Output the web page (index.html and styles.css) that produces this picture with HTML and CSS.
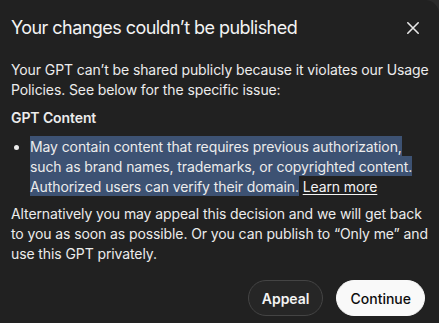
FILE: index.html
```html
<!DOCTYPE html>
<html lang="en">
<head>
<meta charset="utf-8">
<title>Your changes couldn't be published</title>
<link rel="stylesheet" href="styles.css">
</head>
<body>
<div class="dialog">
  <div class="header">
    <h2 class="title">Your changes couldn’t be published</h2>
    <button class="close" aria-label="Close">
      <svg width="24" height="24" viewBox="0 0 24 24" fill="none" stroke="currentColor" stroke-width="1.6" stroke-linecap="round"><path d="M6.8 6.8 17.2 17.2M17.2 6.8 6.8 17.2"/></svg>
    </button>
  </div>
  <p class="intro">Your GPT can’t be shared publicly because it violates our Usage Policies. See below for the specific issue:</p>
  <div class="section-title">GPT Content</div>
  <ul class="issues">
    <li><span class="sel">May contain content that requires previous authorization, such as brand names, trademarks, or copyrighted content. Authorized users can verify their domain.</span> <a class="learn" href="#">Learn more</a></li>
  </ul>
  <p class="alt">Alternatively you may appeal this decision and we will get back to you as soon as possible. Or you can publish to “Only me” and use this GPT privately.</p>
  <div class="actions">
    <button class="btn btn-secondary">Appeal</button>
    <button class="btn btn-primary">Continue</button>
  </div>
</div>
</body>
</html>
```
FILE: styles.css
```css
* { box-sizing: border-box; }
html, body { margin: 0; padding: 0; }
body {
  background: #2b2b2b;
  font-family: Inter, "Noto Sans", "Liberation Sans", sans-serif;
  color: #ececec;
  -webkit-font-smoothing: antialiased;
}
.dialog {
  width: 439px;
  height: 323px;
  background: #212121;
  border-top-right-radius: 14px;
  padding: 0 10px 0 11px;
  display: flex;
  flex-direction: column;
}
.header {
  display: flex;
  align-items: center;
  justify-content: space-between;
  padding-top: 16px;
  padding-right: 4px;
}
.title {
  margin: 0;
  font-size: 18px;
  line-height: 24px;
  font-weight: 400;
  letter-spacing: -0.55px;
  color: #f3f3f3;
}
.close {
  width: 24px;
  height: 24px;
  padding: 0;
  border: 0;
  background: none;
  color: #e8e8e8;
  display: flex;
  align-items: center;
  justify-content: center;
}
.intro, .alt, .issues, .section-title {
  font-size: 14px;
  line-height: 20px;
  letter-spacing: -0.1px;
}
.intro, .alt { margin: 0; }
.intro { margin-top: 20px; }
.section-title {
  margin-top: 8px;
  font-weight: 600;
}
.issues {
  margin: 9px 0 0;
  padding-left: 19px;
}
.sel {
  background: #3d5273;
  padding: 2px 0 1px;
}
.learn {
  color: #f3f3f3;
  text-decoration: underline;
  text-underline-offset: 2px;
}
.alt { margin-top: 7px; }
.actions {
  margin-top: 16px;
  padding-right: 4px;
  display: flex;
  justify-content: flex-end;
  gap: 13px;
}
.btn {
  height: 36px;
  border-radius: 18px;
  font-family: inherit;
  font-size: 14px;
  padding: 0 13px;
}
.btn-secondary {
  background: #262626;
  border: 1px solid #444444;
  color: #f3f3f3;
  font-weight: 600;
}
.btn-primary {
  background: #f9f9f9;
  border: 1px solid #f9f9f9;
  color: #0d0d0d;
  font-weight: 500;
}
```
